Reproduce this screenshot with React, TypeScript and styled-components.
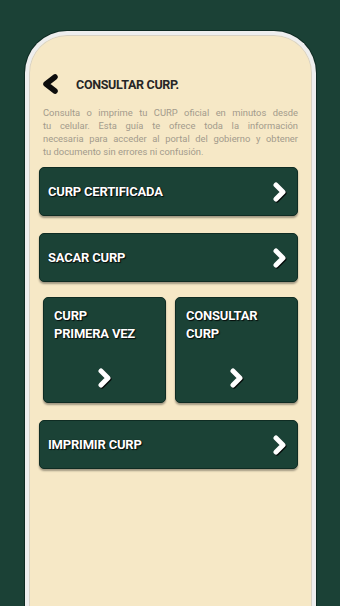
import React from "react";
import styled, { createGlobalStyle } from "styled-components";

const Global = createGlobalStyle`
  html, body { margin: 0; padding: 0; background: #1b4136; overflow: hidden; }
  body { width: 340px; height: 606px; font-family: Roboto, "Liberation Sans", sans-serif; }
`;

const Page = styled.div`
  width: 340px;
  height: 606px;
  padding: 31px 0 0 25px;
  box-sizing: border-box;
`;

const Phone = styled.div`
  width: 291px;
  height: 600px;
  box-sizing: border-box;
  border: 4px solid #eeeeee;
  border-bottom: none;
  border-radius: 42px 42px 0 0;
  background: #f6e8c6;
  box-shadow: 0 0 0 1px #0e2a22, inset 0 0 0 1px #d8d2c4;
  padding: 38px 14px 0 10px;
  display: flex;
  flex-direction: column;
`;

const Header = styled.div`
  display: flex;
  align-items: center;
  height: 22px;
  padding-left: 3px;
  gap: 17px;
`;

const Title = styled.div`
  font-size: 12.5px;
  font-weight: 700;
  color: #262626;
  letter-spacing: -0.3px;
`;

const Desc = styled.div`
  margin: 11px 0 0 4px;
  font-size: 9.4px;
  line-height: 13px;
  color: #a39b8c;
`;

const DescLine = styled.span<{ $last?: boolean }>`
  display: block;
  text-align: justify;
  text-align-last: ${(p) => (p.$last ? "left" : "justify")};
  white-space: nowrap;
`;

const Btn = styled.div<{ $top: number }>`
  margin-top: ${(p) => p.$top}px;
  height: 49px;
  box-sizing: border-box;
  background: #1b4236;
  border: 1px solid #0f2c23;
  border-radius: 5px;
  box-shadow: 0 2px 2px rgba(0, 0, 0, 0.35);
  display: flex;
  align-items: center;
  justify-content: space-between;
  padding: 0 9px 0 8px;
`;

const Label = styled.span`
  color: #ffffff;
  font-size: 13px;
  font-weight: 700;
  letter-spacing: -0.2px;
  line-height: 18px;
  text-shadow: 0 0 1px #000, 1px 1px 1px rgba(0, 0, 0, 0.8);
`;

const Grid = styled.div`
  margin-top: 15px;
  padding-left: 4px;
  display: grid;
  grid-template-columns: 1fr 1fr;
  gap: 9px;
`;

const Card = styled.div`
  height: 106px;
  box-sizing: border-box;
  background: #1b4236;
  border: 1px solid #0f2c23;
  border-radius: 5px;
  box-shadow: 0 2px 2px rgba(0, 0, 0, 0.35);
  padding: 9px 10px 0 10px;
  display: flex;
  flex-direction: column;
`;

const CardChevron = styled.div`
  margin-top: auto;
  margin-bottom: 13px;
  align-self: center;
  display: flex;
`;

const Chevron = () => (
  <svg width="16" height="22" viewBox="0 0 16 22" style={{ filter: "drop-shadow(1px 1.5px 0.6px rgba(0,0,0,0.85))" }}>
    <polyline points="4,4 11,11 4,18" fill="none" stroke="#ffffff" strokeWidth="5" strokeLinecap="round" strokeLinejoin="round" />
  </svg>
);

const Back = () => (
  <svg width="17" height="20" viewBox="0 0 17 20">
    <polyline points="13,3 4,10 13,17" fill="none" stroke="#0d0d0d" strokeWidth="5.5" strokeLinecap="round" strokeLinejoin="round" />
  </svg>
);

export default function App() {
  return (
    <>
      <Global />
      <Page>
        <Phone>
          <Header>
            <Back />
            <Title>CONSULTAR CURP.</Title>
          </Header>
          <Desc>
            <DescLine>Consulta o imprime tu CURP oficial en minutos desde</DescLine>
            <DescLine>tu celular. Esta guía te ofrece toda la información</DescLine>
            <DescLine>necesaria para acceder al portal del gobierno y obtener</DescLine>
            <DescLine $last>tu documento sin errores ni confusión.</DescLine>
          </Desc>
          <Btn $top={9}>
            <Label>CURP CERTIFICADA</Label>
            <Chevron />
          </Btn>
          <Btn $top={17}>
            <Label>SACAR CURP</Label>
            <Chevron />
          </Btn>
          <Grid>
            <Card>
              <Label>
                CURP
                <br />
                PRIMERA VEZ
              </Label>
              <CardChevron>
                <Chevron />
              </CardChevron>
            </Card>
            <Card>
              <Label>
                CONSULTAR
                <br />
                CURP
              </Label>
              <CardChevron>
                <Chevron />
              </CardChevron>
            </Card>
          </Grid>
          <Btn $top={17}>
            <Label>IMPRIMIR CURP</Label>
            <Chevron />
          </Btn>
        </Phone>
      </Page>
    </>
  );
}
